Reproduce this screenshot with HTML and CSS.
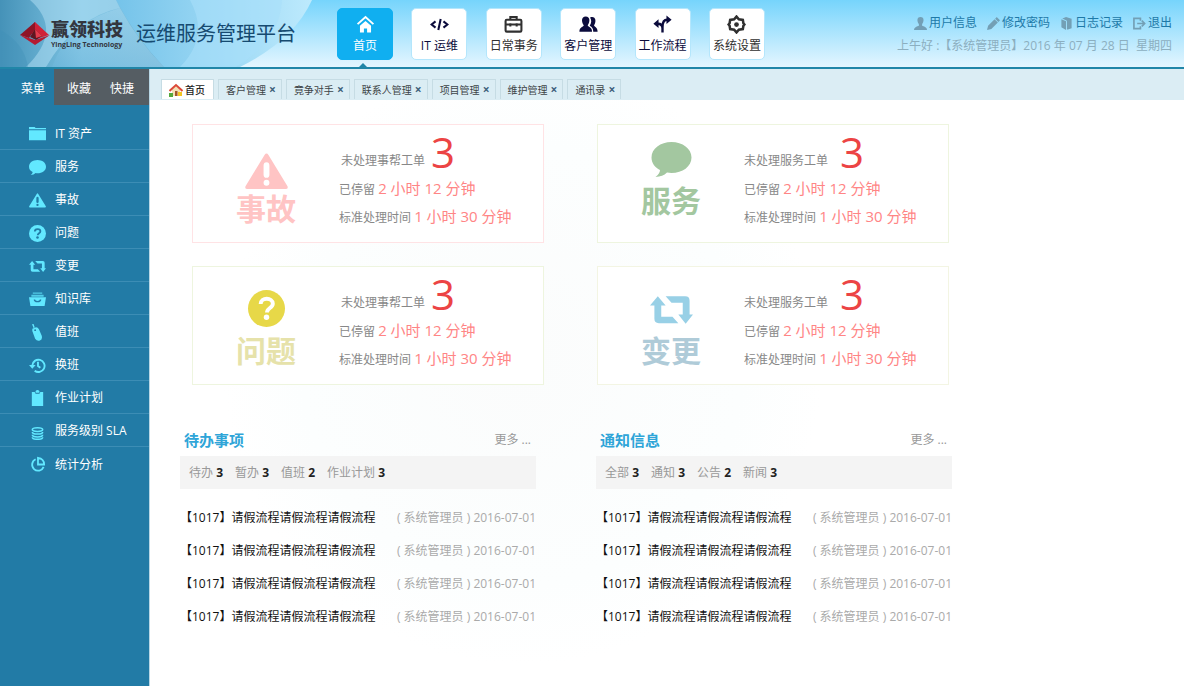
FILE: index.html
```html
<!DOCTYPE html>
<html lang="zh-CN">
<head>
<meta charset="utf-8">
<meta name="viewport" content="width=device-width, initial-scale=1">
<title>运维服务管理平台</title>
<link rel="stylesheet" href="styles.css">
</head>
<body>
<svg class="sprite" aria-hidden="true">
  <symbol id="i-bubble" viewBox="0 0 40 35"><path d="M20 0C31 0 40 6.500 40 15.500S31 31 20 31c-1.600 0-3-.1-4.500-.4C12.500 33.500 9 35 4 35c3-2.500 4.500-4.500 4.500-7C3.500 25.500 0 21 0 15.500 0 6.500 9 0 20 0z"/></symbol>
  <symbol id="i-warn" viewBox="0 0 44 37"><path fill-rule="evenodd" d="M20 1.500q2-3 4 0l19.500 32q1 3-2 3h-39q-3 0-2-3zM22 9q-3 0-3 3.500v9q0 3.500 3 3.500t3-3.500v-9Q25 9 22 9zm0 18a3 3 0 1 0 0 6 3 3 0 1 0 0-6z"/></symbol>
  <symbol id="i-question" viewBox="0 0 38 38"><circle cx="19" cy="19" r="19"/><path class="cut" d="M13 14.500c0-7.500 12.500-7 12.500-.5 0 4.500-6 4.500-6 9" /><circle class="dot" cx="19" cy="28" r="2.800"/></symbol>
  <symbol id="i-swap" viewBox="0 0 44 28"><path d="M8 0l8 9.500h-4.500V21H23l6 6.500H9Q4.500 27.500 4.500 23V9.500H0zM16 0h20q4.500 0 4.500 4.500v14H44L36.500 28 29 18.500h4.500V6.500H22z"/></symbol>
</svg>

<header class="header">
  <svg class="header-art" viewBox="0 0 330 67" preserveAspectRatio="none" aria-hidden="true">
    <defs>
      <linearGradient id="g1" x1="0" y1="0" x2="1" y2="0"><stop offset="0" stop-color="#4592b8"/><stop offset=".5" stop-color="#7fc5e4"/><stop offset="1" stop-color="#6fb4d6"/></linearGradient>
      <linearGradient id="g2" x1="0" y1="0" x2="1" y2="0"><stop offset="0" stop-color="#6fc0e8"/><stop offset="1" stop-color="#bdeafd"/></linearGradient>
      <linearGradient id="g3" x1="0" y1="1" x2="1" y2="0"><stop offset="0" stop-color="#6eb7dc"/><stop offset="1" stop-color="#b4e0f4"/></linearGradient>
    </defs>
    <path fill="url(#g2)" d="M100 0h212q-18 40-72 67H100z"/>
    <path fill="#a9e0fa" opacity=".6" d="M190 0h92q-2 40-46 67h-56q30-30 10-67z"/>
    <path fill="url(#g1)" d="M0 0h116q20 38 48 67H0z"/>
    <path fill="url(#g3)" opacity=".6" d="M52 67Q68 22 120 8q18 33 44 59z"/>
    <path fill="#b6e2f5" opacity=".5" d="M30 0h86l4 8Q74 18 46 67H26Q64 30 30 0z"/>
    <path fill="#3f8fb8" opacity=".35" d="M0 30q24 12 28 37H0z"/>
  </svg>
  <div class="brand">
    <svg class="brand-mark" viewBox="0 0 30 24" aria-hidden="true"><path fill="#d02238" d="M15 0l14 13-13 4L8 8z"/><path fill="#8f1426" d="M15 0L0 13l9 3 6-9z"/><path fill="#b51a30" d="M0 13l15 10 15-10-15 5z"/><path fill="#5e1722" d="M15 7l-5 8 6 3 6-4z"/><path fill="#e33c4d" d="M15 7l7 7-6 2z"/></svg>
    <div class="brand-text"><span class="brand-cn">赢领科技</span><span class="brand-en">YingLing Technology</span></div>
    <h1 class="brand-title">运维服务管理平台</h1>
  </div>
  <nav class="nav">
    <button class="nav-item active" type="button"><svg viewBox="0 0 24 24"><path d="M2 11.500L12 2.500l10 9" fill="none" stroke="currentColor" stroke-width="2.400"/><path d="M5 13.500l7-6 7 6V22h-5v-5h-4v5H5z"/></svg>首页</button>
    <button class="nav-item" type="button"><svg viewBox="0 0 24 24"><path d="M7 8l-5 4 5 4M17 8l5 4-5 4M13.500 5l-3 14" fill="none" stroke="currentColor" stroke-width="2.600"/></svg>IT 运维</button>
    <button class="nav-item grey" type="button"><svg viewBox="0 0 24 24"><path d="M8 6V2.500h8V6M3.500 6h17q1.500 0 1.500 1.500v12q0 1.500-1.500 1.500h-17Q2 21 2 19.500v-12Q2 6 3.500 6zM2.500 12h19M8 10.500v4M16 10.500v4" fill="none" stroke="currentColor" stroke-width="2.600"/></svg>日常事务</button>
    <button class="nav-item" type="button"><svg viewBox="0 0 24 24"><path d="M8.500 2c6 0 5.500 7 2.500 11 0 2 5.500 2 5.500 8H.5c0-6 5.500-6 5.500-8C3 9 2.500 2 8.500 2z"/><path d="M14 3c7-2.500 8.500 5 5 10 0 2 4.500 2 4.500 8H18c0-4-1.500-6-4.500-7.500 2.500-4 2.500-7 .5-10.500z"/></svg>客户管理</button>
    <button class="nav-item" type="button"><svg viewBox="0 0 24 24"><path d="M12 22v-7q0-9 6-9h1M12 17q0-6-6-6H5" fill="none" stroke="currentColor" stroke-width="3"/><path d="M17 .5L23.500 6 17 11.500zM7 5.500L.5 11 7 16.500z"/></svg>工作流程</button>
    <button class="nav-item grey" type="button"><svg viewBox="0 0 24 24"><path d="M12 2l3 3.500 5 .7.700 4.300L22 12l-1.300 1.500-.7 4.300-5 .7-3 3.500-3-3.500-5-.7-.7-4.300L2 12l1.300-1.500.7-4.300 5-.7z" fill="none" stroke="currentColor" stroke-width="3.200"/><circle cx="12" cy="12" r="3"/></svg>系统设置</button>
  </nav>
  <div class="user">
    <div class="user-links">
      <a href="#"><svg viewBox="0 0 12 12"><path d="M6 0c4 0 3 5 1.500 6.500v1.500Q12 9 12 12H0Q0 9 4.500 8V6.500C3 5 2 0 6 0z"/></svg>用户信息</a>
      <a href="#"><svg viewBox="0 0 12 12"><path d="M9 0l3 3-1.500 1.500-3-3zM7 2l3 3-6 6-4 1 1-4z"/></svg>修改密码</a>
      <a href="#"><svg viewBox="0 0 11 14"><path d="M0 2.500l5 2V14l-5-3zM1 1.500l4-1.500 6 2v10l-4 1.500h-1V4z"/></svg>日志记录</a>
      <a href="#"><svg viewBox="0 0 14 13"><path d="M8 3.500V1H1v11h7V9.500M4.500 6.500H12M9.500 3.500l3 3-3 3" fill="none" stroke="currentColor" stroke-width="1.800"/></svg>退出</a>
    </div>
    <p class="user-status">上午好 :【系统管理员】2016 年 07 月 28 日&nbsp; 星期四</p>
  </div>
</header>

<div class="layout">
  <aside class="sidebar">
    <div class="side-tabs"><button type="button" class="side-tab on">菜单</button><button type="button" class="side-tab">收藏</button><button type="button" class="side-tab">快捷</button></div>
    <nav class="menu">
      <a href="#"><svg viewBox="0 0 18 18"><path d="M0 1h6l1 1h11v1.500H0zM0 4.500h18V15H0z"/></svg>IT 资产</a>
      <a href="#"><svg><use href="#i-bubble"/></svg>服务</a>
      <a href="#"><svg><use href="#i-warn"/></svg>事故</a>
      <a href="#"><svg class="q"><use href="#i-question"/></svg>问题</a>
      <a href="#"><svg><use href="#i-swap"/></svg>变更</a>
      <a href="#"><svg viewBox="0 0 18 18"><path d="M4 1.500h10v1.500H4zM2.500 4h13v2h-13z" opacity=".75"/><path fill-rule="evenodd" d="M0 6.500h18L16.500 16h-15zM5 9q0 3 4 3t4-3h-1.500q0 1.500-2.500 1.500T6.500 9z"/></svg>知识库</a>
      <a href="#"><svg viewBox="0 0 18 18"><path d="M4 0l1.500 4" stroke="currentColor" stroke-width="1.500"/><path fill-rule="evenodd" d="M3.500 5l4-1.500q2 0 3 2l3 7q1 4-2 5t-5-2l-3-8zM6.500 5.500a1 1 0 1 0 0 2 1 1 0 1 0 0-2z"/></svg>值班</a>
      <a href="#"><svg viewBox="0 0 18 18"><path d="M3.500 9a6.500 6.500 0 1 1 2.500 5.500M9.500 5v4.500l2.500 2" fill="none" stroke="currentColor" stroke-width="2"/><path d="M0 8.500h7l-3.500 4z"/></svg>换班</a>
      <a href="#"><svg viewBox="0 0 18 18"><path d="M3 2h3l1 2h4l1-2h3v15H3zM7 1q2-2 4 0v2H7z"/></svg>作业计划</a>
      <a href="#"><svg viewBox="0 0 18 18"><g fill="none" stroke="currentColor" stroke-width="1.600"><ellipse cx="9" cy="7" rx="5.500" ry="2"/><path d="M3.500 9.500c0 3 11 3 11 0M3.500 12.500c0 3 11 3 11 0M3.500 15c0 3 11 3 11 0"/></g></svg>服务级别 SLA</a>
      <a href="#"><svg viewBox="0 0 18 18"><path d="M7 3.500a6.300 6.300 0 1 0 8.500 8M9.500 2v7h6.500q0-6-6.500-7z" fill="none" stroke="currentColor" stroke-width="1.900"/></svg>统计分析</a>
    </nav>
  </aside>

  <main class="main">
    <div class="tabs">
      <button type="button" class="tab home"><svg viewBox="0 0 14 14"><path fill="#f3e0b4" d="M3 7l4-4 4 4v6H3z"/><path d="M.5 8L7 2l6.500 6" fill="none" stroke="#dc4a38" stroke-width="2"/><path fill="#a2552c" d="M6 8h2.500v5H6z"/><path fill="#54a83c" d="M0 10h4v4H0z"/><path fill="#f3c522" d="M9 9h4v4H9z"/></svg>首页</button>
      <button type="button" class="tab">客户管理<b>×</b></button>
      <button type="button" class="tab">竟争对手<b>×</b></button>
      <button type="button" class="tab">联系人管理<b>×</b></button>
      <button type="button" class="tab">项目管理<b>×</b></button>
      <button type="button" class="tab">维护管理<b>×</b></button>
      <button type="button" class="tab">通讯录<b>×</b></button>
    </div>
    <div class="content">
      <section class="cards">
        <article class="card red">
          <div class="kind"><svg class="wide"><use href="#i-warn"/></svg><h2>事故</h2></div>
          <div class="facts"><p class="count">未处理事帮工单<strong>3</strong></p><p>已停留 <em>2 小时 12 分钟</em></p><p>标准处理时间 <em>1 小时 30 分钟</em></p></div>
        </article>
        <article class="card green">
          <div class="kind"><svg class="wide"><use href="#i-bubble"/></svg><h2>服务</h2></div>
          <div class="facts"><p class="count">未处理服务工单<strong>3</strong></p><p>已停留 <em>2 小时 12 分钟</em></p><p>标准处理时间 <em>1 小时 30 分钟</em></p></div>
        </article>
        <article class="card yellow">
          <div class="kind"><svg class="wide"><use href="#i-question"/></svg><h2>问题</h2></div>
          <div class="facts"><p class="count">未处理事帮工单<strong>3</strong></p><p>已停留 <em>2 小时 12 分钟</em></p><p>标准处理时间 <em>1 小时 30 分钟</em></p></div>
        </article>
        <article class="card blue">
          <div class="kind"><svg class="wide"><use href="#i-swap"/></svg><h2>变更</h2></div>
          <div class="facts"><p class="count">未处理服务工单<strong>3</strong></p><p>已停留 <em>2 小时 12 分钟</em></p><p>标准处理时间 <em>1 小时 30 分钟</em></p></div>
        </article>
      </section>
      <div class="panels">
        <section class="panel">
          <div class="panel-head"><h2>待办事项</h2><a href="#">更多 ...</a></div>
          <div class="filters"><span>待办 <b>3</b></span><span>暂办 <b>3</b></span><span>值班 <b>2</b></span><span>作业计划 <b>3</b></span></div>
          <ul>
            <li><a href="#">【1017】请假流程请假流程请假流程</a><span>( 系统管理员 ) 2016-07-01</span></li>
            <li><a href="#">【1017】请假流程请假流程请假流程</a><span>( 系统管理员 ) 2016-07-01</span></li>
            <li><a href="#">【1017】请假流程请假流程请假流程</a><span>( 系统管理员 ) 2016-07-01</span></li>
            <li><a href="#">【1017】请假流程请假流程请假流程</a><span>( 系统管理员 ) 2016-07-01</span></li>
          </ul>
        </section>
        <section class="panel">
          <div class="panel-head"><h2>通知信息</h2><a href="#">更多 ...</a></div>
          <div class="filters"><span>全部 <b>3</b></span><span>通知 <b>3</b></span><span>公告 <b>2</b></span><span>新闻 <b>3</b></span></div>
          <ul>
            <li><a href="#">【1017】请假流程请假流程请假流程</a><span>( 系统管理员 ) 2016-07-01</span></li>
            <li><a href="#">【1017】请假流程请假流程请假流程</a><span>( 系统管理员 ) 2016-07-01</span></li>
            <li><a href="#">【1017】请假流程请假流程请假流程</a><span>( 系统管理员 ) 2016-07-01</span></li>
            <li><a href="#">【1017】请假流程请假流程请假流程</a><span>( 系统管理员 ) 2016-07-01</span></li>
          </ul>
        </section>
      </div>
    </div>
  </main>
</div>
</body>
</html>
```
FILE: styles.css
```css
* { box-sizing: border-box; margin: 0; padding: 0; }

body {
  display: flex;
  flex-direction: column;
  min-height: 100vh;
  background: #fff;
  font: 12px/18px "Open Sans", "Noto Sans CJK SC", sans-serif;
}

a { color: inherit; text-decoration: none; }
button { font: inherit; color: inherit; border: 0; background: none; cursor: pointer; }
svg { fill: currentColor; flex: none; }
ul { list-style: none; }
.sprite { position: absolute; width: 0; height: 0; }
.cut { fill: none; stroke: var(--cut, #fff); stroke-width: 4; }
.dot { fill: var(--cut, #fff); }

/* header */
.header {
  position: relative;
  display: flex;
  height: 69px;
  border-bottom: 2px solid #2086a8;
  background: linear-gradient(#76d4fc, #e4f6ff);
}
.header-art { position: absolute; left: 0; top: 0; width: 330px; height: 67px; }
.brand { position: relative; display: flex; align-items: center; width: 337px; padding-left: 20px; flex: none; }
.brand-mark { width: 30px; height: 24px; }
.brand-text { display: flex; flex-direction: column; width: 86px; padding-left: 1px; color: #33363f; }
.brand-cn { font-size: 18px; line-height: 22px; font-weight: 900; }
.brand-en { font-size: 7px; line-height: 10px; font-weight: 700; white-space: nowrap; }
.brand-title { color: #164a70; font-size: 20px; line-height: 30px; font-weight: 400; }

.nav { display: flex; justify-content: space-between; width: 428px; padding-top: 8px; flex: none; }
.nav-item {
  position: relative;
  display: flex;
  flex-direction: column;
  align-items: center;
  gap: 3px;
  width: 56px;
  height: 52px;
  padding-top: 6px;
  border: 1px solid #b4e6fc;
  border-radius: 5px;
  background: #fff;
  color: #0b0b3c;
  white-space: nowrap;
}
.nav-item svg { width: 19px; height: 19px; }
.nav-item.grey { color: #303030; }
.nav-item.active { background: #10aff0; border-color: #10aff0; color: #fff; }
.nav-item.active::after {
  content: "";
  position: absolute;
  top: 54px;
  left: 20px;
  border: 5px solid transparent;
  border-top: 0;
  border-bottom-color: #2086a8;
}

.user { display: flex; flex-direction: column; align-items: flex-end; gap: 5px; margin-left: auto; padding: 14px 12px 0 0; white-space: nowrap; }
.user-links { display: flex; gap: 10px; color: #1d79a8; }
.user-links a { display: flex; align-items: center; gap: 2px; }
.user-links svg { width: 13px; height: 13px; color: #739fb5; }
.user-status { color: #8cafc0; }

/* sidebar */
.layout { display: flex; flex: 1; }
.sidebar { width: 150px; flex: none; background: #227ba6; border-right: 1px solid #b9d7e5; color: #fff; }
.side-tabs { display: flex; height: 36px; background: #555d63; }
.side-tab { padding: 3px 6px 0 13px; }
.side-tab.on { width: 54px; padding: 3px 0 0 12px; background: #227ba6; }
.menu { display: flex; flex-direction: column; padding-top: 12px; }
.menu a { display: flex; align-items: center; gap: 9px; height: 33px; padding: 2px 0 0 29px; border-bottom: 1px solid #3c8db5; }
.menu a:last-child { border-bottom: 0; }
.menu svg { width: 17px; height: 17px; color: #62e8ff; }
.menu .q { --cut: #227ba6; }

/* page tabs */
.main { flex: 1; min-width: 0; background: radial-gradient(circle at 36% 48%, #fbfcfc 0, #fcfefe 220px, #fff 300px); }
.tabs { display: flex; align-items: flex-end; gap: 4px; height: 31px; padding: 0 11px 1px; background: #dbedf4; }
.tab {
  display: flex;
  align-items: center;
  gap: 3px;
  height: 20px;
  padding: 0 5px 0 7px;
  border: 1px solid #c6dce4;
  border-bottom: 0;
  color: #3d4447;
  font-size: 10px;
  white-space: nowrap;
}
.tab b { color: #3f617c; font-size: 12px; }
.tab.home { gap: 2px; padding-right: 8px; background: #fff; color: #222; font-weight: 500; }
.tab svg { width: 14px; height: 14px; }

/* status cards */
.content { max-width: 802px; padding: 24px 0 24px 30px; }
.cards { display: grid; grid-template-columns: 1fr 1fr; gap: 23px 53px; padding: 0 3px 0 12px; }
.card { display: flex; min-height: 119px; border: 1px solid var(--line); background: #fff; }
.red { --tone: #ffc4c4; --title: #ffc4c4; --line: #ffe3e5; }
.green { --tone: #a3c7a0; --title: #a3c7a0; --line: #eef5df; }
.yellow { --tone: #e7d848; --title: #e6e2aa; --line: #eef5df; }
.blue { --tone: #98d0e6; --title: #afcbd8; --line: #f3f5e3; }
.kind { display: flex; flex-direction: column; align-items: center; justify-content: center; gap: 5px; width: 146px; padding-top: 8px; color: var(--tone); }
.red .kind { gap: 0; padding-top: 14px; }
.green .kind { padding: 0 0 6px; }
.wide { width: 43px; height: 37px; }
.green .wide { height: 35px; }
.blue .wide { height: 28px; }
.blue .kind { gap: 8px; padding-top: 14px; }
.kind h2 { color: var(--title); font-size: 30px; line-height: 38px; font-weight: 700; }
.facts { padding-top: 7px; color: #888; white-space: nowrap; }
.facts p { height: 28px; line-height: 28px; }
.facts em { color: #ff8585; font-size: 15px; font-style: normal; }
.facts .count { display: flex; padding-left: 2px; height: 42px; line-height: 57px; }
.facts .count strong { padding-left: 6px; color: #ec4444; font-size: 42px; line-height: 40px; font-weight: 400; }
.green .count, .blue .count { padding-left: 0; }
.green .count strong, .blue .count strong { padding-left: 12px; }

/* lists */
.panels { display: grid; grid-template-columns: 1fr 1fr; gap: 60px; padding-top: 44px; }
.panel-head { display: flex; align-items: center; justify-content: space-between; height: 27px; padding: 0 5px 5px 4px; color: #999; }
.panel-head h2 { color: #2fa5d8; font-size: 15px; font-weight: 700; }
.filters { display: flex; align-items: center; gap: 12px; height: 33px; padding-left: 9px; background: #f4f4f4; color: #999; }
.filters b { color: #222; }
.panel ul { padding-top: 12px; }
.panel li { display: flex; align-items: center; justify-content: space-between; height: 33px; color: #aaa; white-space: nowrap; }
.panel li a { color: #111; }
```
